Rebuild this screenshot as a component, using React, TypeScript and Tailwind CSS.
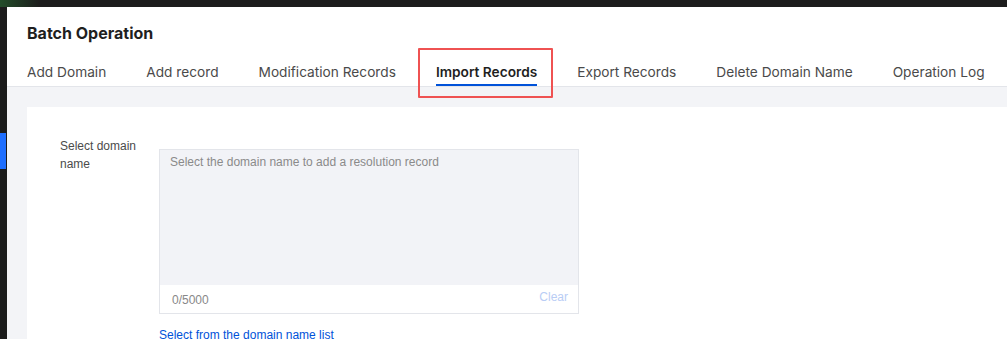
export default function App() {
  const tabs = [
    "Add Domain",
    "Add record",
    "Modification Records",
    "Import Records",
    "Export Records",
    "Delete Domain Name",
    "Operation Log",
  ];
  const active = "Import Records";

  return (
    <div className="w-[1007px] h-[339px] overflow-hidden bg-[#1c1c1c] flex flex-col">
      {/* top strip */}
      <div className="h-[7px] shrink-0 bg-[linear-gradient(90deg,#234d2a_0px,#1c1c1c_40px)]" />
      <div className="flex flex-1 min-h-0">
        {/* left strip */}
        <div className="w-[7px] shrink-0 flex flex-col pt-[126px]">
          <div className="h-[36px] w-[6px] bg-[#1f6fff]" />
        </div>

        <div className="flex-1 flex flex-col bg-[#f3f4f7] font-['Inter',sans-serif]">
          {/* header */}
          <div className="bg-white border-b border-[#e3e5ea] pl-[20px]">
            <div className="h-[51px] flex items-center">
              <h1 className="text-[16px] font-bold text-[#1f1f1f] leading-none">
                Batch Operation
              </h1>
            </div>
            <div className="flex gap-10 h-[28px]">
              {tabs.map((tab) => {
                const isActive = tab === active;
                return (
                  <div key={tab} className="relative flex flex-col">
                    <span
                      className={
                        isActive
                          ? "text-[13.7px] leading-[28px] font-semibold text-[#1f1f1f]"
                          : "text-[13.7px] leading-[28px] text-[#4a4a4a]"
                      }
                    >
                      {tab}
                    </span>
                    {isActive && (
                      <>
                        <div className="absolute left-0 right-0 bottom-0 h-[2px] bg-[#0052d9]" />
                        <div className="absolute -left-[18px] -right-[16px] -top-[10px] h-[50px] border-2 border-[#ef5252] rounded-[1px]" />
                      </>
                    )}
                  </div>
                );
              })}
            </div>
          </div>

          {/* body */}
          <div className="flex-1 pl-[20px] pt-[20px]">
            <div className="bg-white h-full pl-[33px] pt-[30px] flex font-['Liberation_Sans',Arial,sans-serif]">
              <div className="w-[99px] shrink-0 text-[12px] leading-[18px] text-[#4b4b4b] pr-[10px]">
                Select domain name
              </div>
              <div className="flex flex-col pt-[12px]">
                <div className="w-[420px] h-[165px] border border-[#e3e5ea] flex flex-col">
                  <div className="flex-1 bg-[#f2f3f7] px-[10px] pt-[5px] text-[12px] leading-[14px] text-[#8a8a8a]">
                    Select the domain name to add a resolution record
                  </div>
                  <div className="h-[28px] bg-white flex items-center justify-between pl-[12px] pr-[10px]">
                    <span className="text-[12px] text-[#888888] mt-[1px]">0/5000</span>
                    <span className="text-[12px] text-[#b9cdf5] -mt-[5px]">Clear</span>
                  </div>
                </div>
                <a className="mt-[14px] text-[12px] leading-[14px] text-[#0052d9] cursor-pointer">
                  Select from the domain name list
                </a>
              </div>
            </div>
          </div>
        </div>
      </div>
    </div>
  );
}
